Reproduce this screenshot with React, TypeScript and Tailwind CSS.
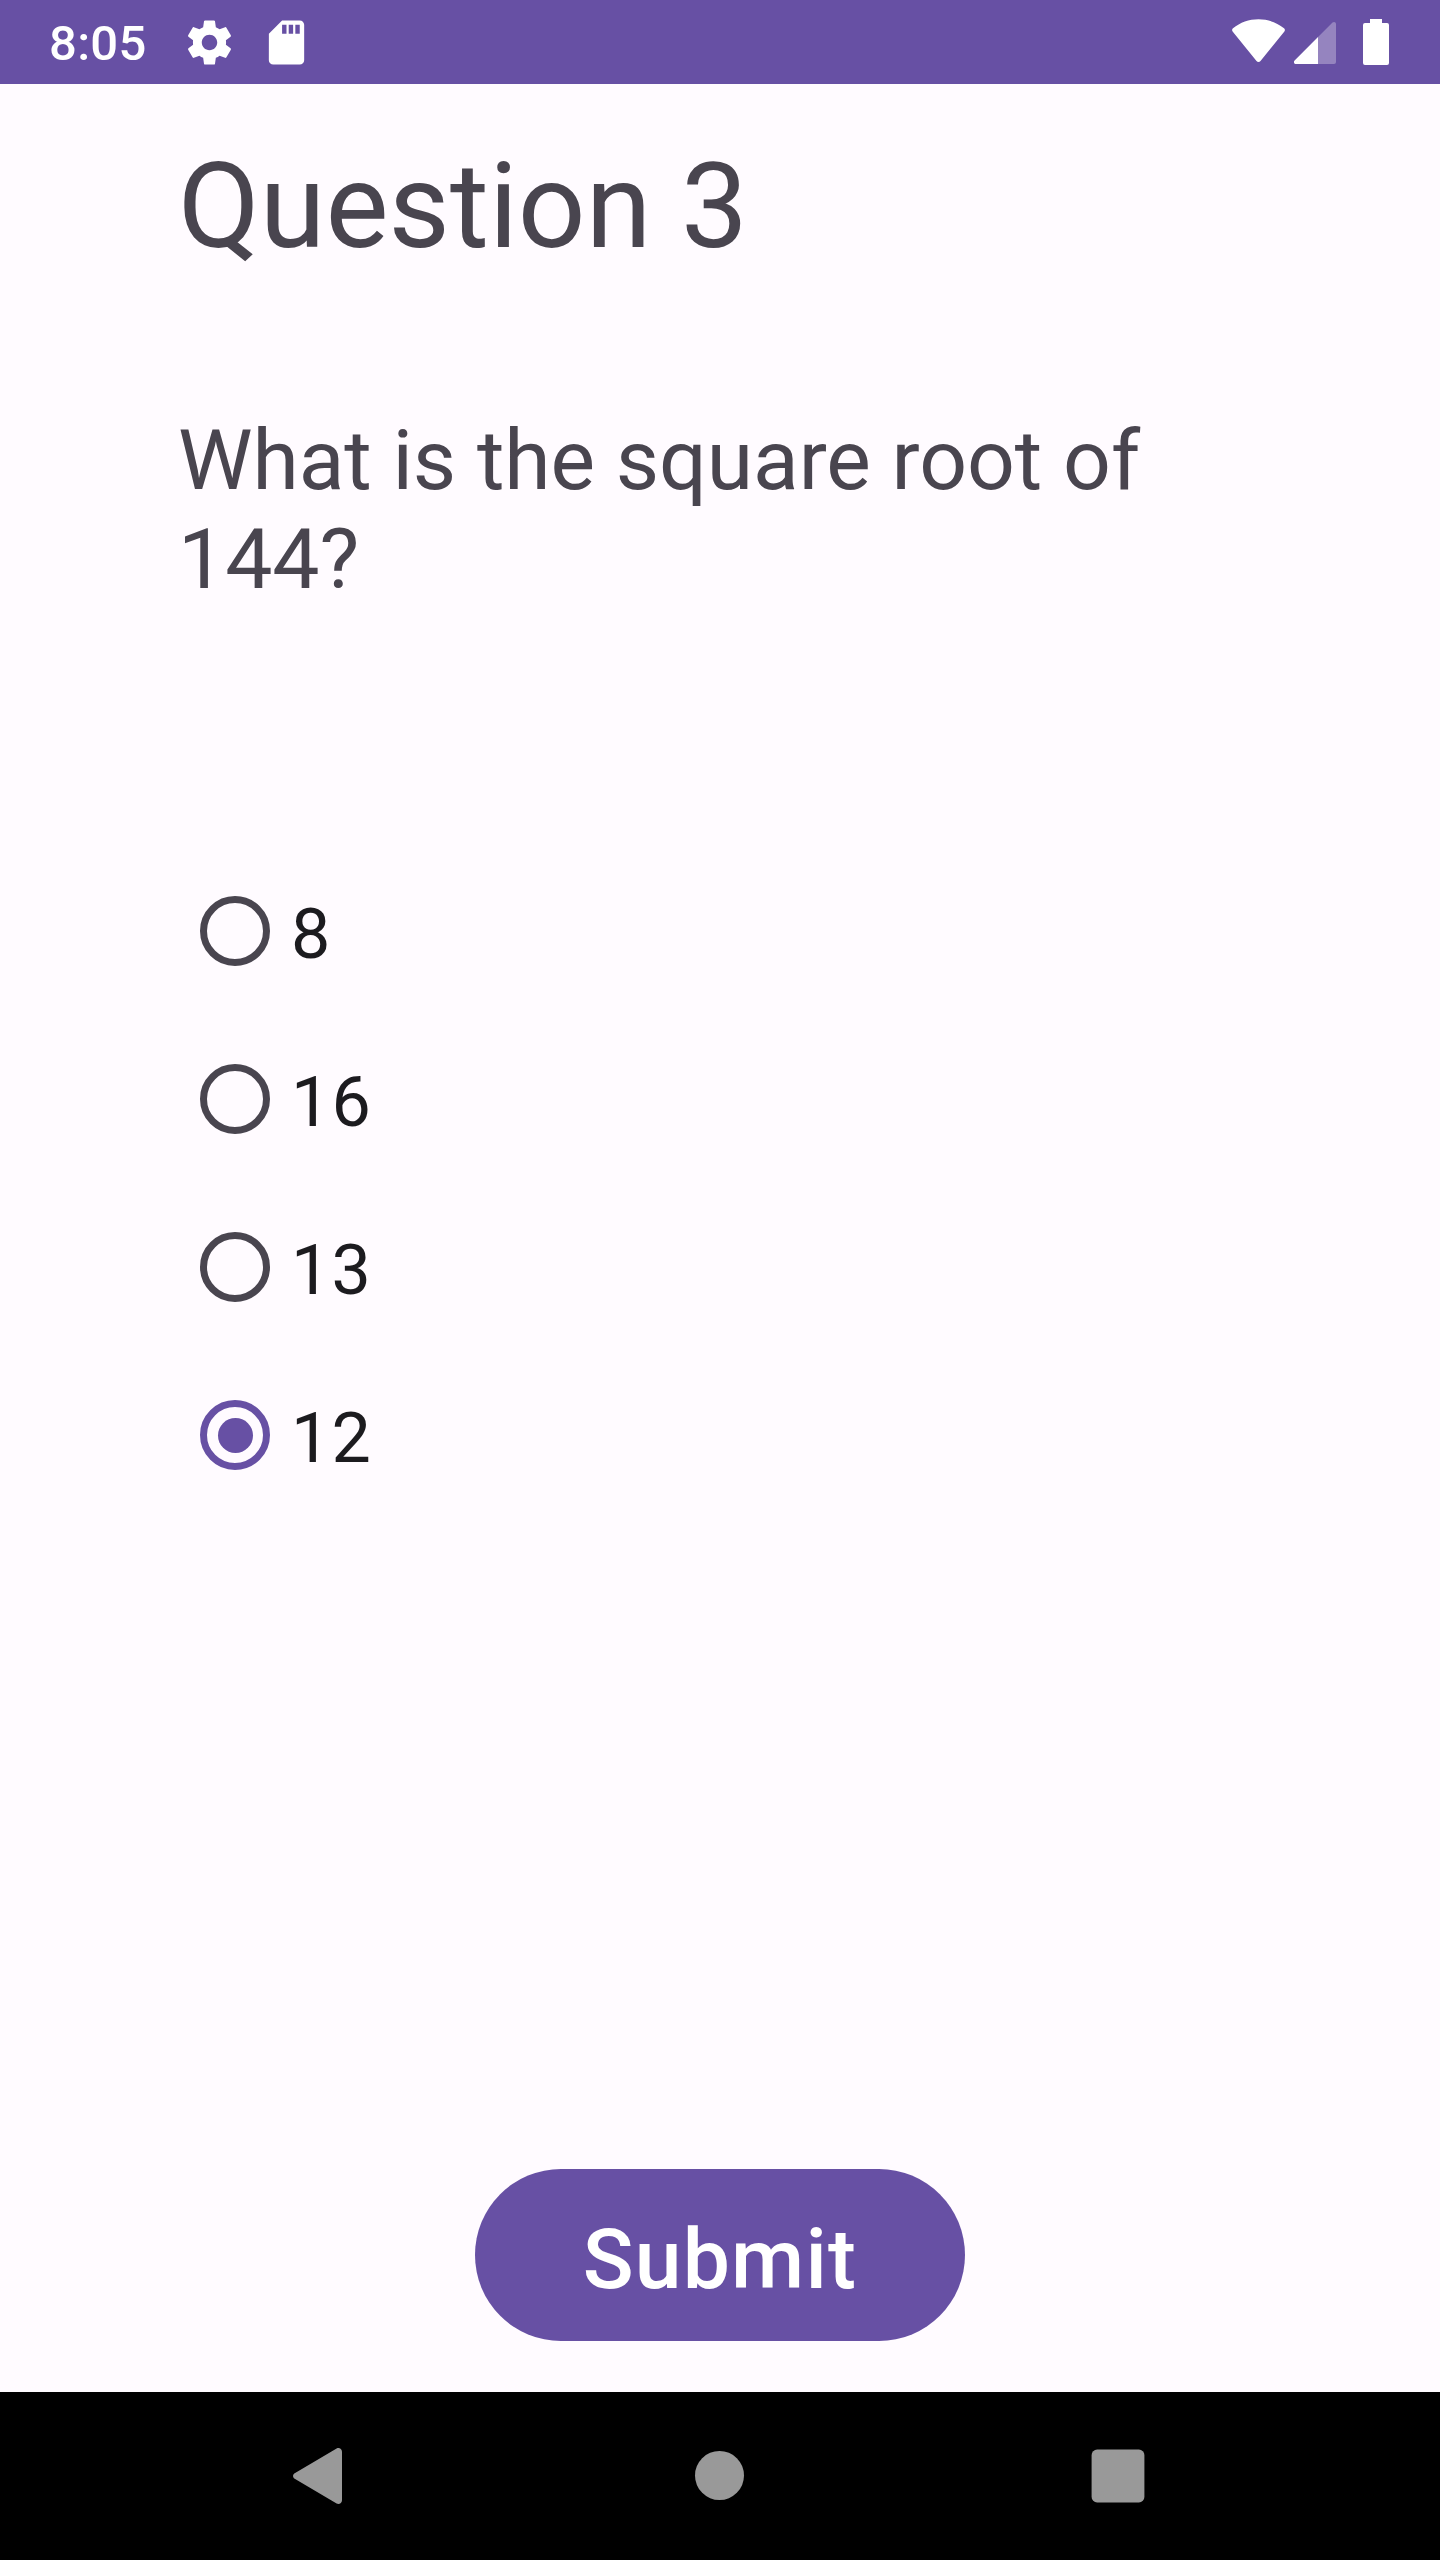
const options = [
  { label: '8', checked: false },
  { label: '16', checked: false },
  { label: '13', checked: false },
  { label: '12', checked: true },
];

function GearIcon() {
  return (
    <svg className="size-[53px]" viewBox="0 0 24 24" fill="#fff">
      <path d="M19.43 12.98c.04-.32.07-.64.07-.98s-.03-.66-.07-.98l2.11-1.65c.19-.15.24-.42.12-.64l-2-3.46c-.12-.22-.39-.3-.61-.22l-2.49 1c-.52-.4-1.08-.73-1.69-.98l-.38-2.65C14.46 2.18 14.25 2 14 2h-4c-.25 0-.46.18-.49.42l-.38 2.65c-.61.25-1.17.59-1.69.98l-2.49-1c-.23-.09-.49 0-.61.22l-2 3.46c-.13.22-.07.49.12.64l2.11 1.65c-.04.32-.07.65-.07.98s.03.66.07.98l-2.11 1.65c-.19.15-.24.42-.12.64l2 3.46c.12.22.39.3.61.22l2.49-1c.52.4 1.08.73 1.69.98l.38 2.65c.03.24.24.42.49.42h4c.25 0 .46-.18.49-.42l.38-2.65c.61-.25 1.17-.59 1.69-.98l2.49 1c.23.09.49 0 .61-.22l2-3.46c.12-.22.07-.49-.12-.64l-2.11-1.65zM12 15.5c-1.93 0-3.5-1.57-3.5-3.5s1.57-3.5 3.5-3.5 3.5 1.57 3.5 3.5-1.57 3.5-3.5 3.5z" />
    </svg>
  );
}

function SdCardIcon() {
  return (
    <svg className="size-[53px]" viewBox="0 0 24 24" fill="#fff">
      <path d="M18 2h-8L4.02 8 4 20c0 1.1.9 2 2 2h12c1.1 0 2-.9 2-2V4c0-1.1-.9-2-2-2zm-6 6h-2V4h2v4zm3 0h-2V4h2v4zm3 0h-2V4h2v4z" />
    </svg>
  );
}

function WifiIcon() {
  return (
    <svg className="h-[84px] w-[54px]" viewBox="0 0 54 84" fill="#fff">
      <path d="M.6 31.4C-.2 30.4 0 29 1 28.2 8.2 22.6 17 19.3 26.5 19.3S44.8 22.6 52 28.2c1 .8 1.2 2.2.4 3.2L28.5 61.1c-1 1.3-3 1.3-4 0z" />
    </svg>
  );
}

function SignalIcon() {
  return (
    <svg className="ml-2 h-[84px] w-[42px]" viewBox="0 0 42 84" fill="#fff">
      <path d="M24 37V64h16a2 2 0 0 0 2-2V24c0-2-2.2-2.7-3.5-1.4z" opacity="0.3" />
      <path d="M24 37V64H2C0 64-.8 61.8.6 60.4z" />
    </svg>
  );
}

function BatteryIcon() {
  return (
    <svg className="ml-[27px] h-[84px] w-[26px]" viewBox="0 0 26 84" fill="#fff">
      <path d="M7 19h12v4h5a2 2 0 0 1 2 2v38a2 2 0 0 1-2 2H2a2 2 0 0 1-2-2V25a2 2 0 0 1 2-2h5z" />
    </svg>
  );
}

function StatusBar() {
  return (
    <header className="flex h-[84px] shrink-0 items-center bg-[#6750a4] pr-[51px] pl-[49px] text-white">
      <span className="w-[134px] pt-[4px] text-[49px] leading-[58px] font-medium tracking-[0.3px]">8:05</span>
      <div className="flex gap-6">
        <GearIcon />
        <SdCardIcon />
      </div>
      <div className="ml-auto flex">
        <WifiIcon />
        <SignalIcon />
        <BatteryIcon />
      </div>
    </header>
  );
}

function Radio({ checked }: { checked: boolean }) {
  return checked ? (
    <span className="flex size-[70px] items-center justify-center rounded-full border-[7px] border-[#6750a4]">
      <span className="size-[35px] rounded-full bg-[#6750a4]" />
    </span>
  ) : (
    <span className="size-[70px] rounded-full border-[7px] border-[#49454f]" />
  );
}

function NavBar() {
  return (
    <nav className="flex h-[168px] shrink-0 items-center bg-black pl-[293px]">
      <svg className="h-[56px] w-[49px]" viewBox="0 0 49 56" fill="#999">
        <path d="M1.7 25.3 43.6.5C46-.7 49 .8 49 3.8v48.4c0 3-3 4.5-5.4 3.3L1.7 30.7c-2.2-1.3-2.2-4.1 0-5.4z" />
      </svg>
      <span className="mb-px ml-[353px] size-[49px] rounded-full bg-[#999]" />
      <svg className="ml-[347px] size-[54px]" viewBox="0 0 54 54" fill="#999">
        <rect x="0.6" y="0.6" width="52.8" height="52.8" rx="5.5" />
      </svg>
    </nav>
  );
}

export default function App() {
  return (
    <div className="flex h-[2560px] w-[1440px] flex-col bg-[#fffbff] font-['Roboto',sans-serif]">
      <StatusBar />
      <main className="flex flex-1 flex-col pt-[53px] pl-[178px]">
        <h1 className="text-[119px] leading-[139px] font-normal text-[#49454f]">Question 3</h1>
        <p className="mt-[135px] w-[1083px] text-[84px] leading-[99px] tracking-[-0.06px] text-[#49454f]">
          What is the square root of 144?
        </p>
        <div className="mt-[238px] flex flex-col pl-[22px]">
          {options.map((option) => (
            <label key={option.label} className="flex h-[168px] items-center text-[#1c1b1f]">
              <Radio checked={option.checked} />
              <span className="ml-[21px] pt-[6px] text-[70px] leading-[82px] tracking-[1.2px]">
                {option.label}
              </span>
            </label>
          ))}
        </div>
        <button className="mt-auto mb-[51px] ml-[297px] h-[172px] w-[490px] rounded-full bg-[#6750a4] pt-[10px] text-[84px] leading-[98px] font-medium tracking-[1.2px] text-white">
          Submit
        </button>
      </main>
      <NavBar />
    </div>
  );
}
